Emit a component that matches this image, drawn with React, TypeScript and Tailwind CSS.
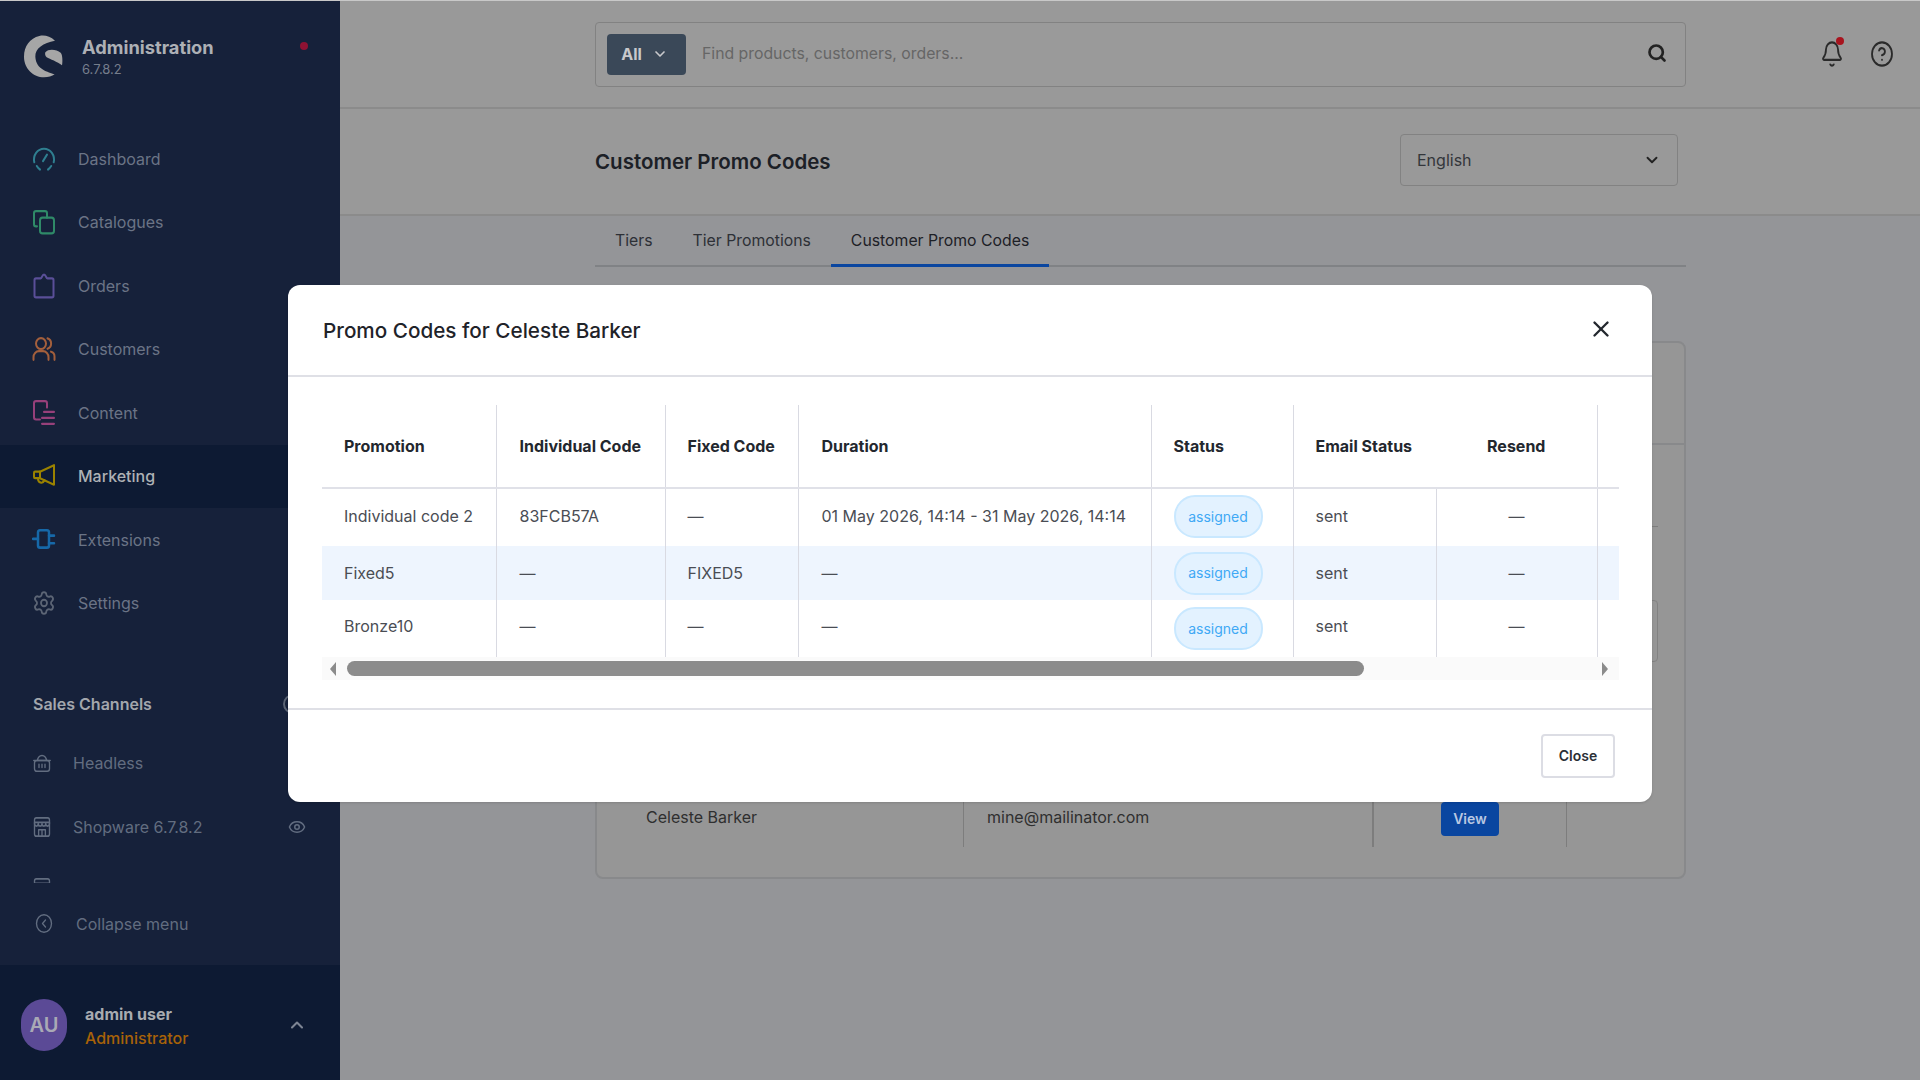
import { Bell, ChevronDown, ChevronUp, CircleChevronLeft, CircleHelp, Eye, Search, Settings, X } from "lucide-react";
import type { ReactNode } from "react";

function Ic({ children, cls, w = "2" }: { children: ReactNode; cls: string; w?: string }) {
  return (
    <svg viewBox="0 0 24 24" preserveAspectRatio="none" fill="none" stroke="currentColor" strokeWidth={w} strokeLinecap="round" strokeLinejoin="round" className={"shrink-0 " + cls}>
      {children}
    </svg>
  );
}

const navSize = "w-6 h-[26px] ";

const nav: { label: string; active?: boolean; icon: ReactNode }[] = [
  { label: "Dashboard", icon: <Ic cls={navSize + "text-[#2f7f90]"}><path d="M2.3 15A10 10 0 1 1 21.7 15" /><path d="M4.8 18.5A10 10 0 0 0 8 21.7" /><path d="M16 21.7A10 10 0 0 0 19.2 18.5" /><path d="M11 14 15 8" /></Ic> },
  { label: "Catalogues", icon: <Ic cls={navSize + "text-[#2f8a68]"}><rect x="8" y="8" width="14" height="14.5" rx="2.5" /><path d="M5 16H4a2 2 0 0 1-2-2V4a2 2 0 0 1 2-2h9a2 2 0 0 1 2 2v4" /></Ic> },
  { label: "Orders", icon: <Ic cls={navSize + "text-[#5a4f98]"}><path d="M8.5 5H4A1.5 1.5 0 0 0 2.5 6.5V21A1.5 1.5 0 0 0 4 22.5H20A1.5 1.5 0 0 0 21.5 21V6.5A1.5 1.5 0 0 0 20 5H15.5C14 5 14 1.5 12 1.5C10 1.5 10 5 8.5 5Z" /></Ic> },
  { label: "Customers", icon: <Ic cls={navSize + "text-[#a35f3c]"}><circle cx="9" cy="7" r="5" /><path d="M1.5 22V19.5A5.5 5.5 0 0 1 7 14H11A5.5 5.5 0 0 1 16.5 19.5V22" /><path d="M15.5 2.2A5 5 0 0 1 15.5 11.8" /><path d="M19 14.5A4.5 4.5 0 0 1 22.5 19V22" /></Ic> },
  { label: "Content", icon: <Ic cls={navSize + "text-[#96407a]"}><path d="M8 18H4a2 2 0 0 1-2-2V3a2 2 0 0 1 2-2h9a2 2 0 0 1 2 2v4" /><path d="M12 11H22M10 16.5H22M10 22H22" /></Ic> },
  { label: "Marketing", active: true, icon: <Ic cls={navSize + "text-[#9a8200]"}><path d="M22 2 8 8H3A1 1 0 0 0 2 9V13A1 1 0 0 0 3 14H8L22 20Z" /><path d="M8 8V14" /><path d="M6 14.5C6 18 10.5 20 12.5 16" /></Ic> },
  { label: "Extensions", icon: <Ic w="2.5" cls={navSize + "text-[#1668a8]"}><path d="M8 3H15A2 2 0 0 1 17 5V17A2 2 0 0 1 15 19H8A2 2 0 0 1 6 17V5A2 2 0 0 1 8 3Z" /><path d="M1 11H6M17 8H22M17 15H22" /></Ic> },
  { label: "Settings", icon: <Settings strokeWidth={1.8} preserveAspectRatio="none" className={navSize + "shrink-0 text-[#5c6575]"} /> },
];

const rows = [
  { h: "h-[58px]", bg: "bg-white", text: "pb-[4px]", badge: "pb-[2px]", promo: "Individual code 2", code: "83FCB57A", fixed: "—", dur: "01 May 2026, 14:14 - 31 May 2026, 14:14" },
  { h: "h-[54px]", bg: "bg-[#eef5fe]", text: "pb-[1px]", badge: "pb-0", promo: "Fixed5", code: "—", fixed: "FIXED5", dur: "—" },
  { h: "h-[57px]", bg: "bg-white", text: "pb-[5px]", badge: "pb-0", promo: "Bronze10", code: "—", fixed: "—", dur: "—" },
];

const thBase = "px-[22px] text-left font-bold text-[#23272e] border-r border-[#d9dae2] border-b-2 border-b-[#e0e1e8]";
const tdBase = "px-[22px] border-r border-[#d9dae2] ";

function StoreIcon() {
  return (
    <Ic w="1.8" cls="w-[18px] h-[22px]">
      <rect x="2" y="2" width="20" height="20" rx="2.5" />
      <path d="M2 7H22" />
      <path d="M2 8C2 12 7 12 7 8C7 12 12 12 12 8C12 12 17 12 17 8C17 12 22 12 22 8" />
      <path d="M7.5 22V15H16.5V22M12 15V22" />
    </Ic>
  );
}

function Sidebar() {
  return (
    <aside className="w-[340px] shrink-0 h-full flex flex-col bg-[#16213a]">
      <div className="h-[126px] shrink-0 flex items-start pl-5 pt-[19px] pr-8">
        <svg viewBox="0 0 180 210" className="w-[60px] h-[70px] shrink-0" fill="#a6a6a6">
          <path d="M105 62C90 48 72 44 58 48C30 55 12 78 12 110C12 145 40 172 72 172C85 172 96 168 104 163C85 155 48 150 46 110C45 85 70 68 105 62Z" />
          <path d="M76 97C85 85 110 88 122 98C128 104 128 125 126 136C112 125 90 118 80 112C76 108 74 102 76 97Z" />
        </svg>
        <div className="ml-0.5 pt-[15px] flex flex-col">
          <span className="text-[18.3px] leading-6 font-bold text-[#adb0b5]">Administration</span>
          <span className="text-[13px] leading-5 text-[#767e8c]">6.7.8.2</span>
        </div>
        <span className="ml-auto mt-[22px] w-2 h-2 rounded-full bg-[#8f1233]" />
      </div>

      <nav className="flex flex-col shrink-0">
        {nav.map((n) => (
          <div key={n.label} className={"h-[63.5px] flex items-center pl-8 gap-[22px] text-base " + (n.active ? "bg-[#0d1a33] text-[#aeb1b5] font-medium" : "text-[#6b7486]")}>
            {n.icon}
            <span>{n.label}</span>
          </div>
        ))}
      </nav>

      <div className="mt-[57px] pl-[33px] pr-[37px] h-6 shrink-0 flex items-center justify-between text-base font-semibold text-[#a3a7ad]">
        <span>Sales Channels</span>
        <span className="w-5 h-5 rounded-full border-2 border-[#5c6575]" />
      </div>

      <div className="mt-[15px] h-[152px] shrink-0 overflow-hidden">
        <div className="h-[64px] flex items-center pl-[33px] gap-[22px] text-base text-[#626d80]">
          <Ic w="1.8" cls="w-[18px] h-[20px]">
            <rect x="2" y="9" width="20" height="13" rx="3" />
            <path d="M1 9H23M6 9A6 6 0 0 1 18 9M8 13.5V17.5M12 13.5V17.5M16 13.5V17.5" />
          </Ic>
          <span>Headless</span>
        </div>
        <div className="h-[64px] flex items-center pl-[33px] gap-[22px] pr-[34px] text-base text-[#626d80]">
          <StoreIcon />
          <span>Shopware 6.7.8.2</span>
          <Eye strokeWidth={2} className="w-[18px] h-[18px] ml-auto text-[#626d80]" />
        </div>
        <div className="h-[64px] -mt-[3px] flex items-center pl-[33px] text-[#626d80]">
          <StoreIcon />
        </div>
      </div>

      <div className="flex-1 flex items-center pl-[35px] pb-[1px] gap-[23px] text-base text-[#626d80]">
        <CircleChevronLeft strokeWidth={1.8} className="w-[18px] h-[21px] shrink-0" preserveAspectRatio="none" />
        <span>Collapse menu</span>
      </div>

      <div className="h-[115px] shrink-0 bg-[#0d1a33] flex items-center pl-[21px] pr-[33px] pt-[5px]">
        <div className="w-[46px] h-[52px] rounded-full bg-[#5b4a96] flex items-center justify-center text-[20px] font-semibold text-[#a9a9b5]">AU</div>
        <div className="ml-[18px] mt-[2px] flex flex-col leading-6 text-base">
          <span className="font-bold text-[#a8abb0]">admin user</span>
          <span className="font-medium text-[#a86208]">Administrator</span>
        </div>
        <ChevronUp strokeWidth={2.5} className="w-5 h-5 ml-auto text-[#7d8594]" />
      </div>
    </aside>
  );
}

function Backdrop() {
  return (
    <main className="flex-1 min-w-0 h-full flex flex-col bg-[#949598]">
      <header className="h-[108px] shrink-0 bg-[#999999] border-b-2 border-[#8b8b8b] flex items-center pl-[255px]">
        <div className="w-[1091px] h-[65px] border border-[#828282] rounded bg-[#9a9a9a] flex items-center pl-[11px] pr-[18px]">
          <div className="w-[79px] h-[41px] rounded bg-[#3a4858] flex items-center justify-center gap-2.5 text-base font-bold text-[#c8c9cc] pr-1">
            All <ChevronDown strokeWidth={2.5} className="w-4 h-4" />
          </div>
          <span className="ml-4 text-[15.8px] text-[#666666]">Find products, customers, orders...</span>
          <Search strokeWidth={3.2} className="w-5 h-5 ml-auto -mt-0.5 text-[#222222]" />
        </div>
        <div className="relative ml-[134px]">
          <Bell strokeWidth={1.8} className="w-6 h-7 text-[#2a2a2a]" preserveAspectRatio="none" />
          <span className="absolute -top-[3px] right-0 w-2 h-2 rounded-full bg-[#a8141e]" />
        </div>
        <CircleHelp strokeWidth={1.8} className="w-6 h-7 ml-[26px] text-[#2a2a2a]" preserveAspectRatio="none" />
      </header>

      <div className="h-[107px] shrink-0 bg-[#999999] border-b-2 border-[#8b8b8b] flex items-center pl-[255px] pr-[242px] justify-between">
        <h1 className="text-[20.5px] font-semibold text-[#1c2026] pt-[2px]">Customer Promo Codes</h1>
        <div className="w-[278px] h-[52px] -mt-[3px] border border-[#828282] rounded flex items-center justify-between pl-4 pr-4 text-base text-[#33363b]">
          <span>English</span>
          <ChevronDown strokeWidth={2.5} className="w-[18px] h-[18px] text-[#222222]" />
        </div>
      </div>

      <div className="ml-[255px] w-[1091px] shrink-0">
        <div className="h-[51px] border-b-2 border-[#808285] flex text-[15.8px] text-[#2d3036]">
          <div className="px-5 flex items-center h-[51px] pb-[1px]">Tiers</div>
          <div className="px-5 flex items-center h-[51px] pb-[1px]">Tier Promotions</div>
          <div className="px-5 flex items-center h-[51px] pt-[2px] border-b-[3px] border-[#0a46a0] text-[#1d2026]">Customer Promo Codes</div>
        </div>

        <section className="mt-[74px] h-[538px] rounded-lg border-2 border-[#88898b] bg-[#969696] flex flex-col">
          <div className="h-[102px] shrink-0 border-b-2 border-[#88898b]" />
          <div className="mt-[81px] h-px bg-[#7d7d7d] mr-[26px]" />
          <div className="mt-[73px] h-[62px] w-[240px] self-end mr-[26px] rounded border border-[#828282]" />
          <div className="mt-[128px] h-[57px] flex text-base text-[#2f2f2f]">
            <div className="w-[367px] border-r border-[#7d7d7d] pl-[49px] pb-[4px] flex items-center">Celeste Barker</div>
            <div className="w-[410px] border-r-2 border-[#7d7d7d] pl-[23px] pb-[4px] flex items-center">mine@mailinator.com</div>
            <div className="w-[193px] border-r border-[#7d7d7d] flex items-center justify-center">
              <span className="w-[58px] h-[34px] rounded bg-[#0a46a0] text-sm font-semibold text-[#b9c8e2] flex items-center justify-center">View</span>
            </div>
          </div>
        </section>
      </div>
    </main>
  );
}

function Modal() {
  return (
    <div className="absolute left-[288px] top-[284px] w-[1364px] h-[517px] rounded-xl bg-white shadow-sm flex flex-col">
      <div className="h-[92px] shrink-0 border-b-2 border-[#dfe0e6] flex items-center justify-between pl-[35px] pr-[38px]">
        <h2 className="text-[20.7px] font-medium text-[#1f2329] pt-[1px]">Promo Codes for Celeste Barker</h2>
        <X strokeWidth={2.2} className="w-[26px] h-[26px] text-[#23272e] -mt-[2px]" />
      </div>

      <div className="flex-1 px-[34px] pt-[28px]">
        <table className="w-[1297px] table-fixed border-collapse text-base text-[#4a4d54]">
          <colgroup>
            <col className="w-[174px]" />
            <col className="w-[169px]" />
            <col className="w-[133px]" />
            <col className="w-[353px]" />
            <col className="w-[142px]" />
            <col className="w-[143px]" />
            <col className="w-[161px]" />
            <col className="w-[22px]" />
          </colgroup>
          <thead>
            <tr className="h-[83px]">
              <th className={thBase}>Promotion</th>
              <th className={thBase + " !pl-[23px]"}>Individual Code</th>
              <th className={thBase}>Fixed Code</th>
              <th className={thBase + " !pl-[23px]"}>Duration</th>
              <th className={thBase}>Status</th>
              <th className="px-[22px] text-left font-bold text-[#23272e] border-b-2 border-b-[#e0e1e8]">Email Status</th>
              <th className={thBase + " !text-center"}>Resend</th>
              <th className="border-b-2 border-b-[#e0e1e8]" />
            </tr>
          </thead>
          <tbody>
            {rows.map((r) => (
              <tr key={r.promo} className={r.h + " " + r.bg}>
                <td className={tdBase + r.text}>{r.promo}</td>
                <td className={tdBase + r.text + " !pl-[23px]"}>{r.code}</td>
                <td className={tdBase + r.text}>{r.fixed}</td>
                <td className={tdBase + r.text + " !pl-[23px] whitespace-nowrap"}>{r.dur}</td>
                <td className={tdBase + r.badge}>
                  <span className="w-[89px] h-[43px] rounded-[21px] border-2 border-[#c9e8ff] bg-[#e3f2ff] text-sm text-[#40a9f5] flex items-center justify-center">assigned</span>
                </td>
                <td className={tdBase + r.text}>sent</td>
                <td className={tdBase + r.text + " text-center"}>—</td>
                <td />
              </tr>
            ))}
          </tbody>
        </table>

        <div className="w-[1297px] h-[23px] bg-[#fafafa] flex items-center pl-[7px] pr-[10px]">
          <svg viewBox="0 0 8 14" className="w-2 h-3.5 shrink-0" fill="#8b8b8b"><path d="M7 0 1 7l6 7Z" /></svg>
          <div className="ml-[10px] w-[1017px] h-[15px] rounded-full bg-[#8b8b8b]" />
          <svg viewBox="0 0 8 14" className="w-2 h-3.5 shrink-0 ml-auto" fill="#8b8b8b"><path d="M1 0l6 7-6 7Z" /></svg>
        </div>
      </div>

      <div className="h-[94px] shrink-0 border-t-2 border-[#dfe0e6] flex items-center justify-end pr-[37px]">
        <span className="w-[74px] h-[44px] rounded border-2 border-[#dcdde4] text-sm font-semibold text-[#2b2f36] flex items-center justify-center">Close</span>
      </div>
    </div>
  );
}

export default function App() {
  return (
    <div className="relative w-[1920px] h-[1080px] overflow-hidden border-t border-[#c8c8c8] font-['Inter',sans-serif]">
      <div className="flex h-full">
        <Sidebar />
        <Backdrop />
      </div>
      <Modal />
    </div>
  );
}
